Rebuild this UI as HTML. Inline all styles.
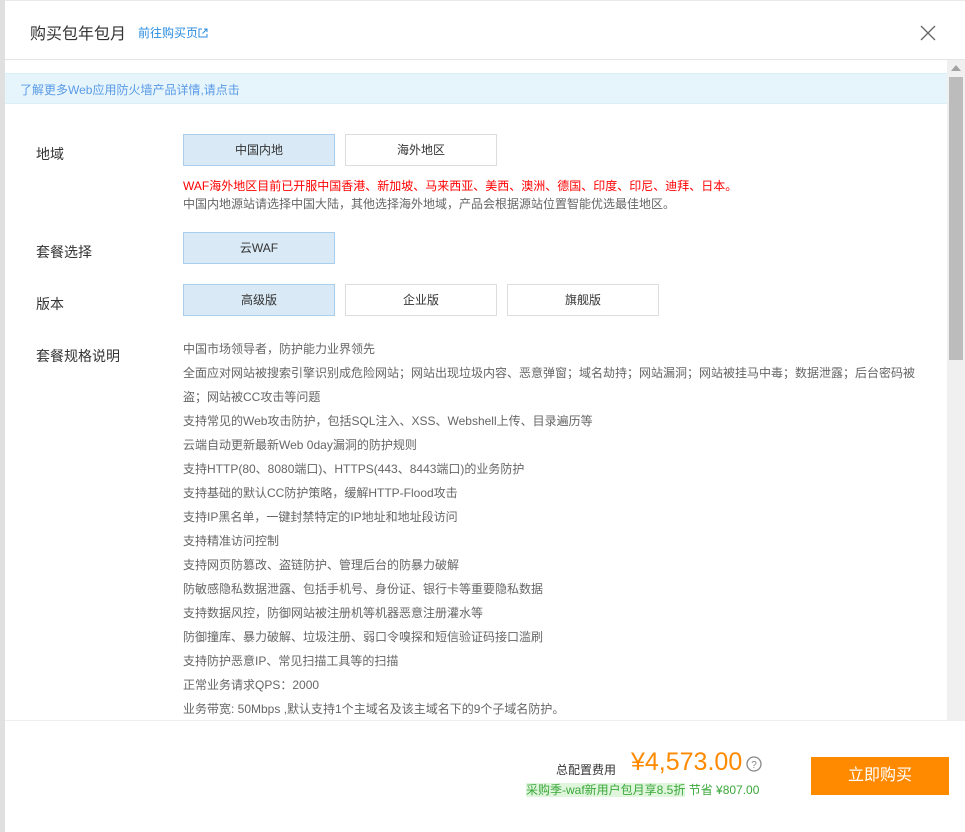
<!DOCTYPE html>
<html><head><meta charset="utf-8"><style>
*{margin:0;padding:0;box-sizing:border-box}
body{width:965px;height:832px;overflow:hidden;background:#fff;font-family:"Liberation Sans","Noto Sans CJK SC",sans-serif;position:relative}
.leftstrip{position:absolute;left:0;top:0;width:5px;height:832px;background:#e0e0e0}
.modal{position:absolute;left:5px;top:0;width:960px;height:832px;background:#fff}
.hdr{position:absolute;left:0;top:0;width:960px;height:60px;border-bottom:1px solid #e5e5e5;border-top:1px solid #e8e8e8}
.title{position:absolute;left:25px;top:19px;font-size:16px;color:#333}
.link{position:absolute;left:133px;top:23px;font-size:12px;color:#2a8ee0}
.close{position:absolute;left:915px;top:24px}
.body{position:absolute;left:0;top:60px;width:942px;height:660px;overflow:hidden;background:#fff}
.banner{position:absolute;left:0;top:13px;width:942px;height:31px;background:#e6f5fc;border-top:1px solid #dbeff8;border-bottom:1px solid #dbeff8;font-size:12px;color:#5a9ae6;padding:7px 0 0 15px}
.lbl{position:absolute;left:31px;font-size:14px;color:#333}
.btn{position:absolute;width:152px;height:32px;border:1px solid #ddd;font-size:12px;color:#333;text-align:center;line-height:30px;background:#fff}
.btn.sel{background:#d9e9f5;border-color:#a9cdea}
.note{position:absolute;left:178px;font-size:12px;line-height:18px}
.spec{position:absolute;left:178px;top:277px;width:750px;font-size:12px;color:#666;line-height:24px}
.sb{position:absolute;left:942px;top:60px;width:18px;height:660px;background:#f0f0f0}
.thumb{position:absolute;left:2px;top:17px;width:14px;height:283px;background:#bcbcbc}
.ftr{position:absolute;left:0;top:720px;width:960px;height:112px;background:#fff;border-top:1px solid #eee}
</style></head><body>
<div class="leftstrip"></div>
<div class="modal">
<div class="hdr">
<div class="title">购买包年包月</div>
<div class="link">前往购买页<svg width="10" height="10" viewBox="0 0 10 10" style="vertical-align:-1px"><path d="M4 1H1v8h8V6M6 1h3v3M9 1L4.5 5.5" stroke="#2a8ee0" fill="none" stroke-width="1"/></svg></div>
<svg class="close" width="16" height="16" viewBox="0 0 16 16"><path d="M1 1L15 15M15 1L1 15" stroke="#666" stroke-width="1.3"/></svg>
</div>
<div class="body">
<div class="banner">了解更多Web应用防火墙产品详情,请点击</div>
<div class="lbl" style="top:84px">地域</div>
<div class="btn sel" style="left:178px;top:74px">中国内地</div>
<div class="btn" style="left:340px;top:74px">海外地区</div>
<div class="note" style="top:117px;color:#f00">WAF海外地区目前已开服中国香港、新加坡、马来西亚、美西、澳洲、德国、印度、印尼、迪拜、日本。</div>
<div class="note" style="top:135px;color:#666">中国内地源站请选择中国大陆，其他选择海外地域，产品会根据源站位置智能优选最佳地区。</div>
<div class="lbl" style="top:182px">套餐选择</div>
<div class="btn sel" style="left:178px;top:172px">云WAF</div>
<div class="lbl" style="top:234px">版本</div>
<div class="btn sel" style="left:178px;top:224px">高级版</div>
<div class="btn" style="left:340px;top:224px">企业版</div>
<div class="btn" style="left:502px;top:224px">旗舰版</div>
<div class="lbl" style="top:286px">套餐规格说明</div>
<div class="spec">中国市场领导者，防护能力业界领先<br>全面应对网站被搜索引擎识别成危险网站；网站出现垃圾内容、恶意弹窗；域名劫持；网站漏洞；网站被挂马中毒；数据泄露；后台密码被盗；网站被CC攻击等问题<br>支持常见的Web攻击防护，包括SQL注入、XSS、Webshell上传、目录遍历等<br>云端自动更新最新Web 0day漏洞的防护规则<br>支持HTTP(80、8080端口)、HTTPS(443、8443端口)的业务防护<br>支持基础的默认CC防护策略，缓解HTTP-Flood攻击<br>支持IP黑名单，一键封禁特定的IP地址和地址段访问<br>支持精准访问控制<br>支持网页防篡改、盗链防护、管理后台的防暴力破解<br>防敏感隐私数据泄露、包括手机号、身份证、银行卡等重要隐私数据<br>支持数据风控，防御网站被注册机等机器恶意注册灌水等<br>防御撞库、暴力破解、垃圾注册、弱口令嗅探和短信验证码接口滥刷<br>支持防护恶意IP、常见扫描工具等的扫描<br>正常业务请求QPS：2000<br>业务带宽: 50Mbps ,默认支持1个主域名及该主域名下的9个子域名防护。</div>
</div>
<div class="sb"><svg style="position:absolute;left:4px;top:5px" width="10" height="6"><path d="M5 0L10 6H0z" fill="#a3a3a3"/></svg><div class="thumb"></div></div>
<div class="ftr">
<div style="position:absolute;left:551px;top:40px;font-size:12px;color:#333">总配置费用</div>
<div style="position:absolute;left:626px;top:27px;font-size:25px;color:#ff8a00">¥4,573.00</div>
<svg style="position:absolute;left:741px;top:35px" width="16" height="16" viewBox="0 0 16 16"><circle cx="8" cy="8" r="7" fill="none" stroke="#888" stroke-width="1.3"/><text x="8" y="12" font-size="10" text-anchor="middle" fill="#888" font-family="Liberation Sans">?</text></svg>
<div style="position:absolute;left:521px;top:60px;font-size:12px;color:#3aa83a"><span style="background:#dff5dc">采购季-waf新用户包月享8.5折</span> 节省 ¥807.00</div>
<div style="position:absolute;left:806px;top:36px;width:138px;height:38px;background:#ff8a00;color:#fff;font-size:16px;text-align:center;line-height:38px">立即购买</div>
</div>
</div>
</body></html>
